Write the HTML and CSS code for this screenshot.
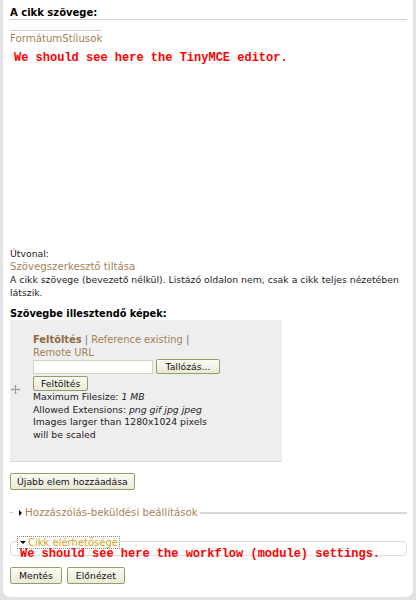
FILE: index.html
```html
<!DOCTYPE html>
<html>
<head>
<meta charset="utf-8">
<link rel="stylesheet" href="styles.css">
</head>
<body>
<div class="panel">
  <div class="field-title">A cikk szövege:</div>
  <div class="toolbar"><a class="lnk">FormátumStílusok</a></div>
  <div class="editor">
    <div class="red">We should see here the TinyMCE editor.</div>
  </div>
  <div class="path">Útvonal:</div>
  <a class="lnk toggle">Szövegszerkesztő tiltása</a>
  <div class="desc">A cikk szövege (bevezető nélkül). Listázó oldalon nem, csak a cikk teljes nézetében látszik.</div>

  <div class="field-title2">Szövegbe illesztendő képek:</div>
  <div class="imgbox">
    <div class="move">
      <svg width="9" height="9" viewBox="0 0 9 9"><path d="M4.5 0.5 L4.5 8.5 M0.5 4.5 L8.5 4.5 M3.5 1.5 L4.5 0.5 L5.5 1.5 M3.5 7.5 L4.5 8.5 L5.5 7.5 M1.5 3.5 L0.5 4.5 L1.5 5.5 M7.5 3.5 L8.5 4.5 L7.5 5.5" stroke="#999" stroke-width="1" fill="none"/></svg>
    </div>
    <div class="imgcontent">
      <div class="tabs"><a class="lnk strong">Feltöltés</a> | <a class="lnk">Reference existing</a> |<br><a class="lnk">Remote URL</a></div>
      <div class="filerow"><span class="finput"></span><button class="btn">Tallózás...</button></div>
      <button class="btn upload">Feltöltés</button>
      <div class="info">Maximum Filesize: <em>1 MB</em></div>
      <div class="info">Allowed Extensions: <em>png gif jpg jpeg</em></div>
      <div class="info">Images larger than 1280x1024 pixels<br>will be scaled</div>
    </div>
  </div>
  <button class="btn addmore">Újabb elem hozzáadása</button>

  <div class="collapsed">
    <span class="seg-left"></span>
    <span class="tri-right"></span>
    <a class="lnk">Hozzászólás-beküldési beállítások</a>
    <span class="seg-right"></span>
  </div>

  <div class="fs">
    <span class="legend"><span class="tri-down"></span>Cikk elérhetősége</span>
    <div class="red red2">We should see here the workflow (module) settings.</div>
  </div>

  <div class="actions">
    <button class="btn">Mentés</button>
    <button class="btn">Előnézet</button>
  </div>
</div>
</body>
</html>
```
FILE: styles.css
```css
html, body {
  margin: 0;
  padding: 0;
  background: #e2e2e2;
}
body {
  font-family: "DejaVu Sans", Verdana, sans-serif;
  font-size: 9.3px;
  color: #222;
  width: 416px;
  height: 600px;
  overflow: hidden;
}
.panel {
  margin: 0 3px;
  background: #fff;
  height: 597px;
  border-radius: 0 0 7px 7px;
  padding: 7px 6px 0 7px;
  box-sizing: border-box;
}
.field-title {
  font-weight: bold;
  font-size: 10px;
  line-height: 12px;
  color: #000;
  border-bottom: 1px solid #d0d0d0;
  padding-bottom: 0;
}
.lnk {
  color: #a58358;
  text-decoration: none;
}
.toolbar {
  margin-top: 10px;
  width: 91px;
  border-top: 1px solid #d0d0d0;
  padding-top: 2px;
  font-size: 10.2px;
  line-height: 12px;
}
.editor {
  height: 202px;
  padding: 7px 0 0 4px;
  box-sizing: border-box;
}
.red {
  font-family: "Liberation Mono", "Courier New", monospace;
  font-weight: bold;
  font-size: 12px;
  line-height: 13px;
  color: #ff0000;
  white-space: nowrap;
}
.path, .toggle, .desc {
  display: block;
  line-height: 13px;
}
.toggle {
  font-size: 10.2px;
}
.desc {
  line-height: 13px;
  padding-right: 4px;
}
.field-title2 {
  font-weight: bold;
  font-size: 9.75px;
  line-height: 12px;
  color: #000;
  margin-top: 9px;
}
.imgbox {
  display: flex;
  width: 272px;
  height: 142px;
  background: #eeeeee;
  border-bottom: 1px solid #dcdcdc;
  margin-top: 0;
  box-sizing: border-box;
}
.move {
  width: 23px;
  display: flex;
  justify-content: flex-start;
  padding-left: 1px;
  box-sizing: border-box;
  margin-top: 65px;
  align-self: flex-start;
}
.imgcontent {
  align-self: flex-start;
  padding-top: 13px;
}
.tabs {
  font-size: 9.9px;
  line-height: 13px;
  color: #777;
}
.strong {
  font-weight: bold;
  color: #8d6b3d;
}
.filerow {
  display: flex;
  align-items: center;
  gap: 3px;
  margin-top: 0;
}
.finput {
  display: block;
  width: 120px;
  height: 14px;
  background: #fff;
  border: 1px solid #cfd7c2;
  box-sizing: border-box;
}
.btn {
  font-family: "DejaVu Sans", Verdana, sans-serif;
  font-size: 9.3px;
  line-height: 11px;
  color: #111;
  padding: 2px 6px;
  border: 1px solid #8fa266;
  border-radius: 2px;
  background: linear-gradient(#fbfbf4, #ece9d8);
  margin: 0;
}
.filerow .btn {
  width: 64px;
  padding: 1px 4px;
}
.upload {
  margin-top: 2px;
  padding: 1px 7px;
}
.info {
  line-height: 12.7px;
}
.info:first-of-type {
  margin-top: 1px;
}
.info em {
  font-style: italic;
}
.addmore {
  display: block;
  margin-top: 11px;
}
.collapsed {
  display: flex;
  align-items: center;
  margin-top: 16px;
  font-size: 10.2px;
  line-height: 13px;
}
.seg-left {
  width: 3px;
  height: 0;
  border-top: 1px solid #ccc;
  margin-right: 6px;
}
.tri-right {
  width: 0;
  height: 0;
  border-top: 3px solid transparent;
  border-bottom: 3px solid transparent;
  border-left: 3px solid #000;
  margin-right: 3px;
}
.seg-right {
  flex: 1;
  height: 0;
  border-top: 2px solid #d8d8d8;
  margin-left: 2px;
}
.fs {
  position: relative;
  margin-top: 22px;
  height: 15px;
  border: 1px solid #dedede;
  border-radius: 4px;
  box-sizing: border-box;
}
.legend {
  position: absolute;
  left: 6px;
  top: -6px;
  background: #fff;
  border: 1px dotted #888;
  padding: 0 1px 0 2px;
  font-size: 10px;
  line-height: 11px;
  color: #d6a31c;
  display: flex;
  align-items: center;
}
.tri-down {
  width: 0;
  height: 0;
  border-left: 3px solid transparent;
  border-right: 3px solid transparent;
  border-top: 3px solid #000;
  margin-right: 2px;
}
.red2 {
  position: absolute;
  left: 9px;
  top: 6px;
}
.actions {
  display: flex;
  gap: 5px;
  margin-top: 11px;
}
.actions .btn {
  padding: 2px 8px;
}
```
